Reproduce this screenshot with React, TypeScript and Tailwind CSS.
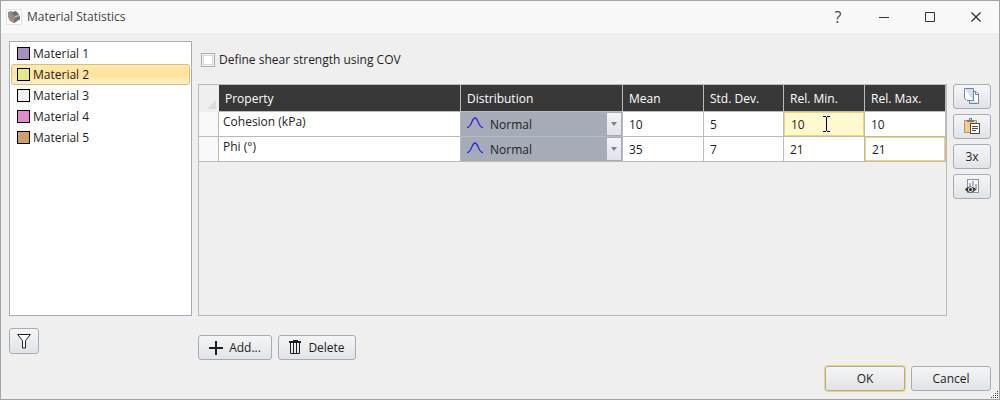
import React from 'react';

const materials = [
  { name: 'Material 1', color: '#a690c4' },
  { name: 'Material 2', color: '#e0ea8c' },
  { name: 'Material 3', color: '#f2f0f2' },
  { name: 'Material 4', color: '#e08cc8' },
  { name: 'Material 5', color: '#cfa06a' },
];

const rows = [
  { property: 'Cohesion (kPa)', mean: '10', stdDev: '5', relMin: '10', relMax: '10' },
  { property: 'Phi (°)', mean: '35', stdDev: '7', relMin: '21', relMax: '21' },
];

const columns = [
  { title: 'Distribution', width: 'w-[162px]' },
  { title: 'Mean', width: 'w-[81px]' },
  { title: 'Std. Dev.', width: 'w-[80px]' },
  { title: 'Rel. Min.', width: 'w-[81px]' },
  { title: 'Rel. Max.', width: 'w-[81px]' },
];

const buttonClass =
  'flex items-center justify-center rounded-[3px] border border-[#a5acb8] bg-linear-to-b from-[#f4f5f6] to-[#e1e4e7] text-[#1e1e1e]';

const AppIcon = () => (
  <svg width="16" height="16" viewBox="0 0 16 16" className="shrink-0" aria-hidden="true">
    <rect x="0.5" y="0.5" width="15" height="15" fill="#fdfdfd" stroke="#e2e2e2" />
    <path d="M2 3 5 2 7 3 10 2 13 5 14 10 8 14 4 12 2 8Z" fill="#8b8b8b" />
    <path d="M6 4 9 2 12 5 9 7Z" fill="#6a6a6a" />
    <path d="M8 9 14 7V10L8 14Z" fill="#727272" />
    <path d="M9 7 12 6 14 7 8 9Z" fill="#b4b4b4" />
    <path d="M3 5C3 8 4 10 7 12M7 12 8 9" fill="none" stroke="#e58457" />
  </svg>
);

const BellCurve = () => (
  <svg width="16" height="12" viewBox="0 0 16 12" className="pointer-events-none absolute left-[6px] top-[5px]" aria-hidden="true">
    <path d="M0 10.5C5 10.5 4.5 1 8 1S11 10.5 16 10.5" fill="none" stroke="#2323e6" strokeWidth="1.3" />
  </svg>
);

const CopyIcon = () => (
  <svg width="16" height="17" viewBox="0 0 16 17" aria-hidden="true">
    <path d="M5.5 3.5H12L14.5 6V15.5H5.5Z" fill="#fff" stroke="#6f83a6" />
    <path d="M6 8 14 15H6Z" fill="#dce3f2" />
    <path d="M0.5 0.5H9.5V12.5H3L0.5 10Z" fill="#fff" stroke="#6f83a6" />
    <path d="M1 1H9V12Z" fill="#d3dcef" />
    <path d="M11.5 4V6.5H14" fill="none" stroke="#6f83a6" />
  </svg>
);

const PasteIcon = () => (
  <svg width="17" height="17" viewBox="0 0 17 17" aria-hidden="true">
    <path d="M0.5 2.5H12.5V14.5H0.5Z" fill="#f0cd94" stroke="#c48f48" />
    <path d="M3 4V2H5V0H8V2H10V4Z" fill="#7a7a7a" />
    <path d="M6 1H7V2H6Z" fill="#eee" />
    <rect x="6.5" y="5.5" width="9" height="10" fill="#fff" stroke="#4b4b4b" />
    <path d="M8 8.5H14M8 10.5H14M8 12.5H12" stroke="#4b4b4b" />
  </svg>
);

const ViewChartIcon = () => (
  <svg width="15" height="15" viewBox="0 0 15 15" aria-hidden="true">
    <rect x="2.5" y="0.5" width="11" height="13" fill="#f4f6f8" stroke="#8c939b" />
    <path d="M4 4H6V8H4ZM7 2H9V7H7ZM10 5H12V11H10Z" fill="#a6b4c6" />
    <path d="M0 10.5C2.5 6.5 8.5 6.5 11 10.5C8.5 14.5 2.5 14.5 0 10.5Z" fill="#383838" />
    <circle cx="5.5" cy="10.5" r="2.5" fill="#e6e6e6" />
    <circle cx="5.5" cy="10.5" r="1.5" fill="#262626" />
  </svg>
);

const FilterIcon = () => (
  <svg width="15" height="15" viewBox="0 0 15 15" aria-hidden="true">
    <path d="M0.5 0.5H13.5L8.5 6.5V14H5.5V6.5Z" fill="#fafafa" stroke="#222" />
  </svg>
);

const PlusIcon = () => (
  <svg width="14" height="14" viewBox="0 0 14 14" aria-hidden="true">
    <path d="M7 0V14M0 7H14" stroke="#1e1e1e" strokeWidth="2" />
  </svg>
);

const TrashIcon = () => (
  <svg width="13" height="15" viewBox="0 0 13 15" aria-hidden="true">
    <path d="M4 0H9V1H12V3H0V1H4Z" fill="#1e1e1e" />
    <path d="M1.5 3V13.5H10.5V3M4.5 3V13M7.5 3V13" fill="none" stroke="#1e1e1e" />
  </svg>
);

const TextCursor = () => (
  <svg width="8" height="16" viewBox="0 0 8 16" className="pointer-events-none absolute left-[39px] top-1" aria-hidden="true">
    <path d="M0 0.5H3M4 0.5H7M3.5 1V15M0 15.5H3M4 15.5H7" stroke="#000032" />
  </svg>
);

const ResizeGrip = () => (
  <svg width="8" height="8" viewBox="0 0 8 8" className="absolute bottom-0 right-0" aria-hidden="true">
    <path d="M6 0H7V1H6ZM4 2H5V3H4ZM6 2H7V3H6ZM2 4H3V5H2ZM4 4H5V5H4ZM6 4H7V5H6ZM0 6H1V7H0ZM2 6H3V7H2ZM4 6H5V7H4ZM6 6H7V7H6Z" fill="#444" />
  </svg>
);

const TitleBar = () => (
  <header className="flex h-8 items-center bg-[#f8f8f8] pl-[5px] text-[#444]">
    <AppIcon />
    <h1 className="ml-[5px] flex-1">Material Statistics</h1>
    <button aria-label="Help" className="flex h-8 w-[46px] items-center justify-center text-base">
      ?
    </button>
    <button aria-label="Minimize" className="flex h-8 w-[46px] items-center justify-center">
      <svg width="10" height="10" viewBox="0 0 10 10"><path d="M0 5.5H10" stroke="#333" /></svg>
    </button>
    <button aria-label="Maximize" className="flex h-8 w-[46px] items-center justify-center">
      <svg width="10" height="10" viewBox="0 0 10 10"><path d="M0.5 0.5H9.5V9.5H0.5Z" fill="none" stroke="#333" /></svg>
    </button>
    <button aria-label="Close" className="flex h-8 w-[46px] items-center justify-center">
      <svg width="10" height="10" viewBox="0 0 10 10"><path d="M0.5 0.5 9.5 9.5M9.5 0.5 0.5 9.5" stroke="#333" strokeWidth="1.4" /></svg>
    </button>
  </header>
);

const NumberCell: React.FC<{ label: string; value: string; state?: 'editing' | 'current' }> = ({ label, value, state }) => (
  <td className="relative h-[25px] border-b border-r border-[#bababa] bg-white p-0">
    <input
      aria-label={label}
      defaultValue={value}
      className={
        state === 'editing'
          ? 'block h-6 w-full border border-[#f0d766] bg-[#fff9cf] px-[6px] outline-none'
          : state === 'current'
            ? 'block h-6 w-full border border-[#f0d766] bg-white px-[6px] outline-none'
            : 'block h-6 w-full border border-transparent px-[5px] outline-none'
      }
    />
    {state === 'editing' && <TextCursor />}
  </td>
);

const StatisticsTable = () => (
  <table className="w-full table-fixed border-separate border-spacing-0 text-left">
    <thead>
      <tr className="h-[27px]">
        <th aria-label="Row" className="relative w-5 border-r border-[#efefef] bg-[#efefef] p-0">
          <svg width="9" height="9" viewBox="0 0 9 9" className="absolute bottom-[3px] right-[2px]"><path d="M9 0V9H0Z" fill="#dcdcdc" /></svg>
        </th>
        <th className="border-b border-r border-[#bababa] bg-[#383838] p-0 pl-[6px] pt-[2px] font-medium text-white">Property</th>
        {columns.map((col) => (
          <th key={col.title} className={`${col.width} border-b border-r border-[#bababa] bg-[#383838] p-0 pl-[6px] pt-[2px] font-medium text-white`}>
            {col.title}
          </th>
        ))}
      </tr>
    </thead>
    <tbody>
      {rows.map((row, index) => (
        <tr key={row.property} className="h-[25px]">
          <td className="border-b border-r border-[#bababa] bg-[#f9f9f9] p-0" />
          <td className="border-b border-r border-[#bababa] bg-white p-0 pb-1 pl-1">{row.property}</td>
          <td className="relative border-b border-r border-[#bababa] bg-[#a5acb8] p-0">
            <BellCurve />
            <select
              aria-label={`${row.property} distribution`}
              className="block h-6 w-full appearance-none pl-[29px] pt-[2px] outline-none"
            >
              <option>Normal</option>
            </select>
            <span className="pointer-events-none absolute right-px top-px flex h-[22px] w-[14px] items-center justify-center bg-linear-to-b from-[#f3f4f5] to-[#e0e3e7]">
              <svg width="6" height="4" viewBox="0 0 6 4"><path d="M0 0H6L3 4Z" fill="#7c838d" /></svg>
            </span>
          </td>
          <NumberCell label={`${row.property} mean`} value={row.mean} />
          <NumberCell label={`${row.property} standard deviation`} value={row.stdDev} />
          <NumberCell label={`${row.property} relative minimum`} value={row.relMin} state={index === 0 ? 'editing' : undefined} />
          <NumberCell label={`${row.property} relative maximum`} value={row.relMax} state={index === 1 ? 'current' : undefined} />
        </tr>
      ))}
    </tbody>
  </table>
);

const App: React.FC = () => {
  return (
    <div className="relative flex min-h-screen flex-col border border-[#a3a3a3] bg-[#efefef] font-['Open_Sans',sans-serif] text-xs text-[#1e1e1e]">
      <TitleBar />

      <main className="flex flex-1 gap-[6px] px-2 pt-2">
        <aside className="flex w-[183px] shrink-0 flex-col">
          <ul className="flex-1 border border-[#a5acb8] bg-white p-px">
            {materials.map((material, index) => (
              <li key={material.name}>
                <button
                  className={
                    index === 1
                      ? 'flex h-[21px] w-full items-center gap-[3px] rounded-[3px] border border-[#d9bd79] bg-linear-to-b from-[#ffebab] via-[#ffe19c] to-[#fff0c4] px-[5px]'
                      : 'flex h-[21px] w-full items-center gap-[3px] border border-transparent px-[5px]'
                  }
                >
                  <span className="size-[13px] border border-black" style={{ backgroundColor: material.color }} />
                  {material.name}
                </button>
              </li>
            ))}
          </ul>
          <button aria-label="Filter" className={`${buttonClass} mb-[6px] mt-3 h-[26px] w-[30px]`}>
            <FilterIcon />
          </button>
        </aside>

        <section className="flex min-w-0 flex-1 flex-col">
          <label className="mb-[5px] flex h-[38px] items-center gap-1 pl-[3px]">
            <input
              type="checkbox"
              className="size-[14px] appearance-none border border-[#a5acb8] bg-white shadow-[inset_0_0_0_1px_#f4f4f4,inset_0_0_0_2px_#d5dae0]"
            />
            Define shear strength using COV
          </label>
          <div className="flex-1 border border-[#bababa]">
            <StatisticsTable />
          </div>
          <div className="mt-[19px] flex gap-[6px]">
            <button className={`${buttonClass} h-[25px] w-[74px] gap-[6px]`}>
              <PlusIcon />
              Add...
            </button>
            <button className={`${buttonClass} h-[25px] w-[78px] gap-[6px]`}>
              <TrashIcon />
              Delete
            </button>
          </div>
        </section>

        <div className="flex w-[38px] shrink-0 flex-col gap-[5px] pt-[43px]">
          <button aria-label="Copy" className={`${buttonClass} h-[25px]`}>
            <CopyIcon />
          </button>
          <button aria-label="Paste" className={`${buttonClass} h-[25px]`}>
            <PasteIcon />
          </button>
          <button className={`${buttonClass} h-[25px]`}>3x</button>
          <button aria-label="View chart" className={`${buttonClass} h-[25px]`}>
            <ViewChartIcon />
          </button>
        </div>
      </main>

      <footer className="flex justify-end gap-[6px] px-2 pb-2 pt-[6px]">
        <button className={`${buttonClass} h-[25px] w-20 ring-1 ring-[#fbd54e]`}>OK</button>
        <button className={`${buttonClass} h-[25px] w-20`}>Cancel</button>
      </footer>
      <ResizeGrip />
    </div>
  );
};

export default App;
